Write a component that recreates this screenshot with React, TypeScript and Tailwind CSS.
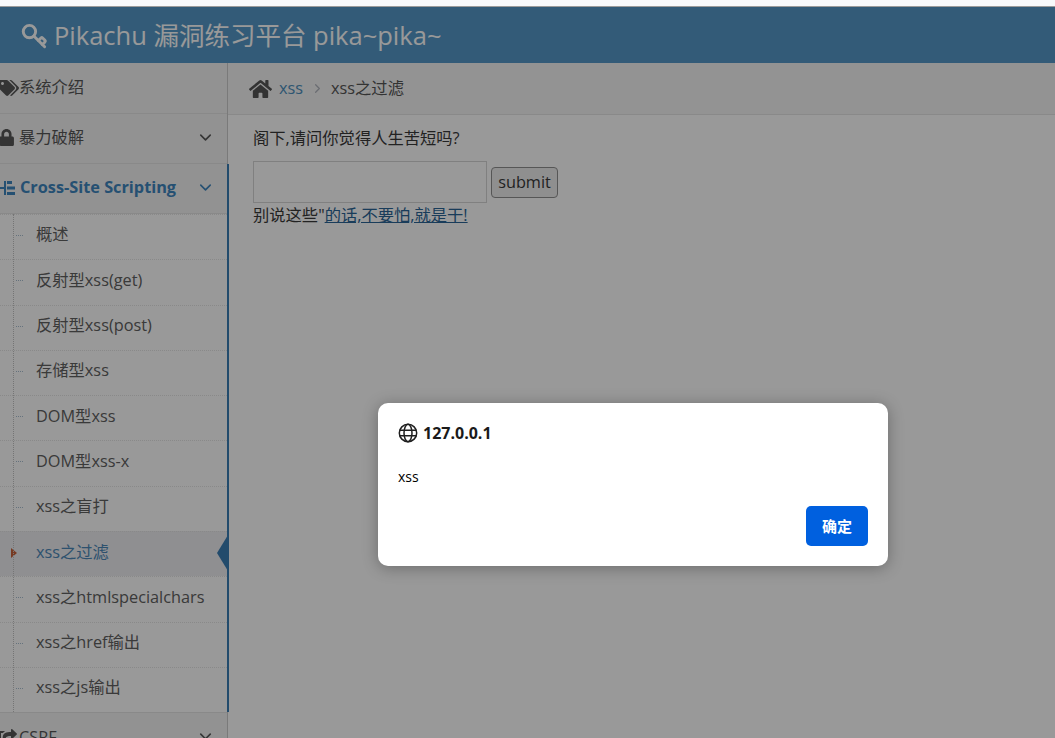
import { FaHome, FaLock, FaShareSquare, FaTags } from 'react-icons/fa';
import { ChevronDown, ChevronRight, Key } from 'lucide-react';

const subItems = [
  '概述',
  '反射型xss(get)',
  '反射型xss(post)',
  '存储型xss',
  'DOM型xss',
  'DOM型xss-x',
  'xss之盲打',
  'xss之过滤',
  'xss之htmlspecialchars',
  'xss之href输出',
  'xss之js输出',
];

function SubItem({ label, active }: { label: string; active: boolean }) {
  return (
    <li
      className={`relative flex h-[45.3px] items-center border-t border-dotted border-[#e4e4e4] pb-[5px] pl-[36px] ${
        active ? 'bg-[#eeeef2] text-[#4b88b8]' : 'bg-white text-[#616161]'
      }`}
    >
      {active ? (
        <>
          <span className="absolute left-[11px] top-[16px] h-0 w-0 border-y-[5px] border-l-[6px] border-y-transparent border-l-[#c86139]" />
          <span className="absolute right-[-1px] top-[3px] h-0 w-0 border-y-[18px] border-r-[11px] border-y-transparent border-r-[#3a7db5]" />
        </>
      ) : (
        <span className="absolute left-[16px] top-[20px] w-[7px] border-t border-dotted border-[#a9bfd0]" />
      )}
      {label}
    </li>
  );
}

function SideRow({
  icon,
  label,
  open,
  chevron = true,
}: {
  icon: React.ReactNode;
  label: string;
  open?: boolean;
  chevron?: boolean;
}) {
  return (
    <div
      className={`flex h-[50px] shrink-0 items-center border-b border-[#e5e5e5] bg-[#f3f3f3] pb-[2px] ${
        open ? 'font-bold text-[#3f86bf]' : 'text-[#585858]'
      }`}
    >
      <span className={`flex shrink-0 justify-start ${open ? 'w-[20px]' : 'w-[19px]'}`}>{icon}</span>
      <span className="flex-1">{label}</span>
      {chevron && <ChevronDown className="mr-[12px] h-[19px] w-[19px] font-normal" strokeWidth={2} />}
    </div>
  );
}

function XssIcon() {
  return (
    <svg viewBox="0 0 18 16" className="ml-[-2px] h-[16px] w-[18px]" fill="currentColor">
      <rect x="0" y="7" width="6" height="2" />
      <rect x="6" y="1" width="2" height="14" />
      <rect x="9" y="1" width="5" height="3" />
      <rect x="9" y="6.5" width="8" height="3" />
      <rect x="9" y="12" width="8" height="3" />
    </svg>
  );
}

export default function App() {
  return (
    <div className="relative h-[738px] w-[1055px] overflow-hidden bg-white text-[16.3px] [font-family:'Open_Sans','Noto_Sans_CJK_SC',sans-serif]">
      {/* top strip */}
      <div className="h-[7px] border-b border-[#9b9b9b] bg-[#f8f9fb]" />

      {/* navbar */}
      <div className="flex h-[56px] items-center gap-[6px] bg-[#5598c8] pl-[21px] text-[25.5px] text-white">
        <Key className="h-[27px] w-[27px] -scale-y-100" strokeWidth={2.6} />
        <span>Pikachu 漏洞练习平台 pika~pika~</span>
      </div>

      <div className="flex h-[675px]">
        {/* sidebar */}
        <aside className="relative z-10 flex w-[228px] shrink-0 flex-col border-r border-[#cccccc] bg-[#f3f3f3] pt-[1px]">
          <SideRow icon={<FaTags className="ml-[-1px] h-[18px] w-[20px]" />} label="系统介绍" chevron={false} />
          <SideRow icon={<FaLock className="ml-[-1px] h-[17px] w-[15px]" />} label="暴力破解" />
          <div className="relative shrink-0">
            <SideRow icon={<XssIcon />} label="Cross-Site Scripting" open />
            <ul className="relative">
              <span className="absolute bottom-0 left-[13px] top-0 z-10 border-l border-dotted border-[#c4c4c4]" />
              {subItems.map((item) => (
                <SubItem key={item} label={item} active={item === 'xss之过滤'} />
              ))}
            </ul>
            <span className="absolute bottom-0 right-[-2px] top-0 w-[2px] bg-[#3a7db5]" />
          </div>
          <div className="border-t border-[#e5e5e5]">
            <SideRow icon={<FaShareSquare className="ml-[-1px] h-[16px] w-[18px]" />} label="CSRF" />
          </div>
        </aside>

        {/* main */}
        <main className="min-w-0 flex-1 bg-white">
          <div className="flex h-[52px] items-center border-b border-[#e5e5e5] bg-[#f5f5f5] pl-[21px] text-[#555555]">
            <FaHome className="h-[22px] w-[23px] text-[#555555]" />
            <span className="ml-[7px] text-[#4c8fbd]">xss</span>
            <ChevronRight className="ml-[7px] mr-[6px] h-[15px] w-[15px] text-[#b2b6bf]" strokeWidth={2} />
            <span>xss之过滤</span>
          </div>
          <div className="pl-[25px] pt-[11px] text-[#393939]">
            <p className="leading-[24px]">阁下,请问你觉得人生苦短吗?</p>
            <div className="mt-[11px] flex items-end gap-[4px]">
              <input className="h-[42px] w-[234px] border border-[#d5d5d5] bg-white" />
              <button className="mb-[5px] h-[31px] w-[67px] rounded-[4px] border border-[#8f8f8f] bg-[#efefef] text-[#393939]">
                submit
              </button>
            </div>
            <p className="leading-[24px]">
              别说这些"<a className="text-[#2a6496] underline">的话,不要怕,就是干!</a>
            </p>
          </div>
        </main>
      </div>

      {/* dialog backdrop */}
      <div className="absolute inset-x-0 bottom-0 top-[7px] z-20 bg-black/40" />

      {/* alert dialog */}
      <div className="absolute left-[378px] top-[403px] z-30 flex h-[163px] w-[510px] flex-col rounded-[10px] bg-white px-[20px] pt-[18px] text-[14px] text-black shadow-[0_2px_16px_rgba(0,0,0,0.3)]">
        <div className="flex h-[24px] items-center gap-[5px]">
          <svg viewBox="0 0 20 20" className="h-[20px] w-[20px]" fill="none" stroke="#1f1f1f" strokeWidth="1.5">
            <circle cx="10" cy="10" r="8.7" />
            <ellipse cx="10" cy="10" rx="4" ry="8.7" />
            <path d="M1.5 7.3h17M1.5 12.7h17" />
          </svg>
          <span className="text-[16px] font-bold text-[#1a1a1a]">127.0.0.1</span>
        </div>
        <p className="mt-[22px] leading-[20px]">xss</p>
        <div className="mt-[19px] flex justify-end">
          <button className="h-[40px] w-[62px] rounded-[5px] bg-[#0060df] text-[15px] font-semibold text-white">
            确定
          </button>
        </div>
      </div>
    </div>
  );
}
